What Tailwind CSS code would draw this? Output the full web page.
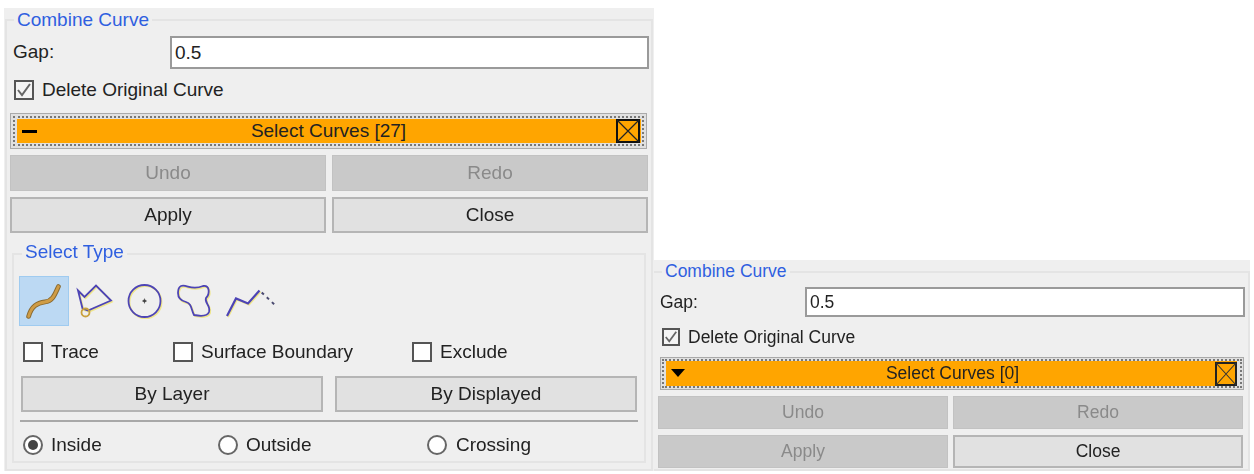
<!DOCTYPE html>
<html><head><meta charset="utf-8"><script src="https://cdn.jsdelivr.net/npm/@tailwindcss/browser@4"></script></head>
<body class="bg-white">
<div class="w-[1254px] h-[474px] flex items-end pl-1 pb-[3px] font-['Liberation_Sans',Arial,sans-serif] text-[#222] overflow-hidden blur-[0.3px]">

<!-- LEFT PANEL -->
<section class="w-[650px] h-[463px] bg-[#efefef] pl-px pr-px flex flex-col">
  <div class="h-[13px] border-b-2 border-[#e4e4e4] mr-0 relative">
    <span class="absolute left-[9px] top-[2px] px-[3px] bg-[#efefef] text-[#2f5fe0] text-[19px] leading-5">Combine Curve</span>
  </div>
  <div class="flex-1 min-h-0 border-r-2 border-l-2 border-[#e4e4e4] flex flex-col">
    <div class="flex items-center h-[33px] mt-[15px] text-[19px]">
      <span class="w-[163px] pl-[6px]">Gap:</span>
      <div class="w-[479px] h-[33px] bg-white border-2 border-[#9a9a9a] pl-[3px] leading-[29px]">0.5</div>
    </div>
    <label class="flex items-center h-5 mt-[11px] ml-[7px] gap-[8px] text-[19px]">
      <span class="w-5 h-5 border-2 border-[#555] bg-[#f4f4f4] flex items-center justify-center"><svg width="16" height="16" viewBox="0 0 16 16"><path d="M2 8l4 5 8-11" fill="none" stroke="#666" stroke-width="2"/></svg></span>
      Delete Original Curve
    </label>
    <div class="w-[637px] h-[36px] ml-[3px] mt-[13px] bg-[#e0e0e0] border border-[#aaa] p-[2px]">
      <div class="w-full h-full border-2 border-dotted border-[#777] py-px pr-px pl-[2px]">
        <div class="h-full bg-[#ffa500] flex items-center pl-[5px] pr-px text-[19px]">
          <span class="w-[15px] h-[3px] bg-black"></span>
          <span class="flex-1 text-center pl-[4px]">Select Curves [27]</span>
          <svg width="24" height="24" viewBox="0 0 24 24" class="shrink-0"><rect x="1" y="1" width="22" height="22" fill="none" stroke="#111" stroke-width="2"/><path d="M1 1L23 23M23 1L1 23" stroke="#222" stroke-width="1.2"/></svg>
        </div>
      </div>
    </div>
    <div class="grid grid-cols-[316px_316px] gap-x-[6px] gap-y-[6px] ml-[3px] mt-[6px] text-[19px]">
      <div class="h-[36px] bg-[#c9c9c9] border border-[#c2c2c2] text-[#8a8a8a] flex items-center justify-center">Undo</div>
      <div class="h-[36px] bg-[#c9c9c9] border border-[#c2c2c2] text-[#8a8a8a] flex items-center justify-center">Redo</div>
      <div class="h-[36px] bg-[#e1e1e1] border-2 border-[#b5b5b5] flex items-center justify-center">Apply</div>
      <div class="h-[36px] bg-[#e1e1e1] border-2 border-[#b5b5b5] flex items-center justify-center">Close</div>
    </div>

    <!-- SELECT TYPE -->
    <div class="w-[634px] h-[210px] ml-[5px] mt-[20px] border-2 border-[#e4e4e4] relative">
      <span class="absolute left-[8px] top-[-13px] px-[3px] bg-[#efefef] text-[#2f5fe0] text-[19px] leading-5">Select Type</span>
      <div class="flex items-center h-[50px] mt-[21px] ml-[5px]">
        <svg width="50" height="50" viewBox="0 0 50 50" class="bg-[#bcd9f3] border border-[#9fcbf0] shrink-0">
          <path d="M9 41C12 30 18 27 26 26C34 25 36 19 40 10" fill="none" stroke="#8a6a30" stroke-width="5" stroke-linecap="round"/>
          <path d="M9 41C12 30 18 27 26 26C34 25 36 19 40 10" fill="none" stroke="#cf9c45" stroke-width="3" stroke-linecap="round"/>
        </svg>
        <svg width="210" height="50" viewBox="68 276 210 50" class="shrink-0">
          <g fill="none" stroke="#efe68a" stroke-width="1.8" transform="translate(1 1.2)">
            <path d="M77 290.5L83.5 297L95 285.5L110 300.5L87 310.5L81.5 308.5Z"/>
            <circle cx="143.5" cy="301" r="16"/>
            <path d="M180 286C186 284 190 291 202 286C209 285 209 294 205 298C203 303 210 305 208 312C206 317 198 316 193 315C190 309 191 304 185 302C181 301 177 298 177 293C177 290 178 287 180 286Z"/>
            <path d="M226 316L235 298.5L247 303.5L258.5 290.5"/>
          </g>
          <g fill="none" stroke="#4d44b5" stroke-width="1.8">
            <path d="M77 290.5L83.5 297L95 285.5L110 300.5L87 310.5L81.5 308.5Z"/>
            <circle cx="143.5" cy="301" r="16"/>
            <path d="M180 286C186 284 190 291 202 286C209 285 209 294 205 298C203 303 210 305 208 312C206 317 198 316 193 315C190 309 191 304 185 302C181 301 177 298 177 293C177 290 178 287 180 286Z"/>
            <path d="M226 316L235 298.5L247 303.5L258.5 290.5" stroke-width="2.2"/>
            <path d="M258.5 290.5L274 305" stroke="#4a4a70" stroke-width="2" stroke-dasharray="3 4" stroke-dashoffset="-3"/>
          </g>
          <circle cx="84.5" cy="312.5" r="4" fill="none" stroke="#c9a13c" stroke-width="1.8"/>
          <circle cx="143.5" cy="301" r="1.4" fill="#333"/>
          <path d="M141 301h5M143.5 298.5v5" stroke="#444" stroke-width=".7"/>
        </svg>
      </div>
      <div class="flex items-center h-5 mt-[16px] ml-[9px] text-[19px]">
        <span class="w-5 h-5 border-2 border-[#555] bg-white shrink-0"></span><span class="ml-[8px] w-[122px]">Trace</span>
        <span class="w-5 h-5 border-2 border-[#555] bg-white shrink-0"></span><span class="ml-[8px] w-[211px]">Surface Boundary</span>
        <span class="w-5 h-5 border-2 border-[#555] bg-white shrink-0"></span><span class="ml-[8px]">Exclude</span>
      </div>
      <div class="grid grid-cols-[302px_302px] gap-x-[12px] mt-[14px] ml-[7px] text-[19px]">
        <div class="h-[36px] bg-[#e1e1e1] border-2 border-[#b5b5b5] flex items-center justify-center">By Layer</div>
        <div class="h-[36px] bg-[#e1e1e1] border-2 border-[#b5b5b5] flex items-center justify-center">By Displayed</div>
      </div>
      <div class="w-[618px] h-[2px] bg-[#a8a8a8] mt-[8px] ml-[6px]"></div>
      <div class="flex items-center h-5 mt-[13px] ml-[9px] text-[19px]">
        <span class="w-5 h-5 rounded-full border-2 border-[#666] bg-white flex items-center justify-center shrink-0"><span class="w-[10px] h-[10px] rounded-full bg-[#444]"></span></span><span class="ml-[8px] w-[167px]">Inside</span>
        <span class="w-5 h-5 rounded-full border-2 border-[#666] bg-white shrink-0"></span><span class="ml-[8px] w-[181px]">Outside</span>
        <span class="w-5 h-5 rounded-full border-2 border-[#666] bg-white shrink-0"></span><span class="ml-[9px]">Crossing</span>
      </div>
    </div>
  </div>
  <div class="h-[2px] border-t-2 border-[#e4e4e4]"></div>
</section>

<!-- RIGHT PANEL -->
<section class="w-[596px] h-[211px] bg-[#efefef] flex flex-col text-[17.5px]">
  <div class="h-[13px] border-b-2 border-[#e4e4e4] relative">
    <span class="absolute left-[8px] top-[1px] px-[3px] bg-[#efefef] text-[#2f5fe0] leading-5">Combine Curve</span>
  </div>
  <div class="flex-1 min-h-0 border-r-2 border-[#e4e4e4] pl-[4px] flex flex-col">
    <div class="flex items-center h-[30px] mt-[14px]">
      <span class="w-[147px] pl-[2px]">Gap:</span>
      <div class="w-[440px] h-[30px] bg-white border-2 border-[#9a9a9a] pl-[3px] leading-[26px]">0.5</div>
    </div>
    <label class="flex items-center h-[18px] mt-[11px] ml-[4px] gap-[8px]">
      <span class="w-[18px] h-[18px] border-2 border-[#555] bg-[#f4f4f4] flex items-center justify-center"><svg width="14" height="14" viewBox="0 0 16 16"><path d="M2 8l4 5 8-11" fill="none" stroke="#666" stroke-width="2"/></svg></span>
      Delete Original Curve
    </label>
    <div class="w-[584px] h-[33px] ml-[2px] mt-[11px] bg-[#e0e0e0] border border-[#aaa] p-px">
      <div class="w-full h-full border-2 border-dotted border-[#777] pl-[2px] pr-[3px]">
        <div class="h-full bg-[#ffa500] flex items-center pl-[4px]">
          <svg width="16" height="9" viewBox="0 0 16 9" class="shrink-0"><path d="M1 0H15L8 8Z" fill="#000"/></svg>
          <span class="flex-1 text-center pl-[4px]">Select Curves [0]</span>
          <svg width="22" height="24" viewBox="0 0 22 24" class="shrink-0"><rect x="1" y="1" width="20" height="22" fill="none" stroke="#222" stroke-width="2"/><path d="M1 1L21 23M21 1L1 23" stroke="#333" stroke-width="1.1"/></svg>
        </div>
      </div>
    </div>
    <div class="grid grid-cols-[290px_290px] gap-x-[5px] gap-y-[6px] mt-[6px]">
      <div class="h-[33px] bg-[#c9c9c9] border border-[#c2c2c2] text-[#8a8a8a] flex items-center justify-center">Undo</div>
      <div class="h-[33px] bg-[#c9c9c9] border border-[#c2c2c2] text-[#8a8a8a] flex items-center justify-center">Redo</div>
      <div class="h-[33px] bg-[#c9c9c9] border border-[#c2c2c2] text-[#8a8a8a] flex items-center justify-center">Apply</div>
      <div class="h-[33px] bg-[#e1e1e1] border-2 border-[#b5b5b5] flex items-center justify-center">Close</div>
    </div>
  </div>
  <div class="h-[2px] border-t-2 border-[#e4e4e4]"></div>
</section>
</div>
</body></html>
